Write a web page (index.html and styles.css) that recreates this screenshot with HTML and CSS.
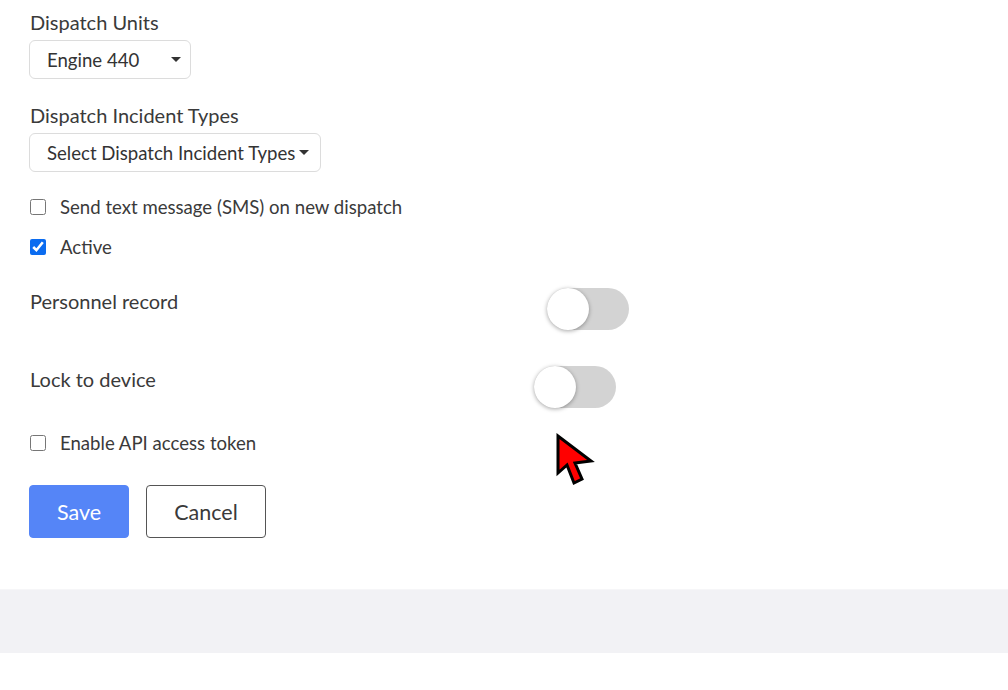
FILE: index.html
```html
<!DOCTYPE html>
<html>
<head>
<title>Edit User</title>
<link rel="stylesheet" href="styles.css">
</head>
<body>

<form class="userForm">
  <div class="field">
    <label class="fieldLabel">Dispatch Units</label>
    <div class="dropdown unitsDrop">
      <span>Engine 440</span><span class="caret"></span>
    </div>
  </div>

  <div class="field typesField">
    <label class="fieldLabel">Dispatch Incident Types</label>
    <div class="dropdown">
      <span>Select Dispatch Incident Types</span><span class="caret"></span>
    </div>
  </div>

  <label class="check"><input type="checkbox"> Send text message (SMS) on new dispatch</label>
  <label class="check"><input type="checkbox" checked> Active</label>

  <div class="switchRow rowPersonnel">
    <span class="switchLabel">Personnel record</span>
    <span class="switch"><span class="knob"></span></span>
  </div>
  <div class="switchRow rowLock">
    <span class="switchLabel">Lock to device</span>
    <span class="switch"><span class="knob"></span></span>
  </div>

  <label class="check apiCheck"><input type="checkbox"> Enable API access token</label>

  <div class="actions">
    <button type="button" class="btnSave">Save</button>
    <button type="button" class="btnCancel">Cancel</button>
  </div>
</form>

<div class="footerBand"></div>

<svg class="pointer" width="44" height="60" viewBox="0 0 44 60">
  <path d="M3 3 L3 40 L12 32 L19 50 L27 46 L20 30 L36 28 Z" fill="#ff0000" stroke="#000" stroke-width="3" stroke-linejoin="miter"/>
</svg>

</body>
</html>
```

FILE: styles.css
```css
html, body {
  margin: 0;
  padding: 0;
  background: #ffffff;
}
body {
  font-family: Lato, "Open Sans", sans-serif;
  font-size: 18.6px;
  color: #3a3a3a;
  position: relative;
}
.userForm {
  padding: 10px 0 0 30px;
  height: 589px;
  box-sizing: border-box;
}
.field {
  margin-bottom: 24px;
}
.typesField {
  margin-bottom: 23px;
}
.fieldLabel {
  display: block;
  font-size: 20px;
  line-height: 24px;
  margin-bottom: 6px;
}
.dropdown {
  display: inline-flex;
  align-items: center;
  height: 39px;
  box-sizing: border-box;
  margin-left: -1px;
  border: 1px solid #dcdcdc;
  border-radius: 6px;
  padding: 0 11px 0 17px;
  color: #333333;
}
.unitsDrop {
  width: 162px;
  justify-content: space-between;
  padding-right: 9px;
}
.dropdown .caret {
  display: inline-block;
  margin-left: 4px;
  border-left: 5px solid transparent;
  border-right: 5px solid transparent;
  border-top: 5px solid #333333;
}
.check {
  display: flex;
  align-items: center;
  height: 24px;
  margin-top: 16px;
}
.check input {
  width: 16px;
  height: 16px;
  margin: 0 14px 0 0;
  accent-color: #0b6cf0;
}
.switchRow {
  display: flex;
  align-items: flex-start;
  height: 42px;
}
.rowPersonnel {
  margin-top: 29px;
}
.rowLock {
  margin-top: 36px;
}
.switchLabel {
  font-size: 20px;
  line-height: 24px;
  margin-top: 1px;
}
.rowPersonnel .switchLabel {
  width: 517px;
}
.rowLock .switchLabel {
  width: 504px;
}
.switch {
  display: inline-block;
  width: 82px;
  height: 42px;
  border-radius: 21px;
  background: #d3d3d3;
  position: relative;
}
.switch .knob {
  position: absolute;
  left: 0;
  top: 0;
  width: 42px;
  height: 42px;
  border-radius: 50%;
  background: #ffffff;
  box-shadow: 0 1px 4px rgba(0, 0, 0, 0.35);
}
.apiCheck {
  margin-top: 23px;
}
.actions {
  display: flex;
  gap: 17px;
  margin-top: 30px;
}
.actions button {
  height: 53px;
  font-family: Lato, "Open Sans", sans-serif;
  font-size: 21.5px;
  border-radius: 4px;
  cursor: pointer;
}
.btnSave {
  width: 100px;
  margin-left: -1px;
  background: #5585f7;
  border: 1px solid #5585f7;
  color: #ffffff;
}
.btnCancel {
  width: 120px;
  background: #ffffff;
  border: 1px solid #555555;
  color: #3a3a3a;
}
.footerBand {
  height: 63px;
  background: #f2f2f5;
  border-top: 1px solid #f6f6f8;
}
.pointer {
  position: absolute;
  left: 555px;
  top: 433px;
}
```
